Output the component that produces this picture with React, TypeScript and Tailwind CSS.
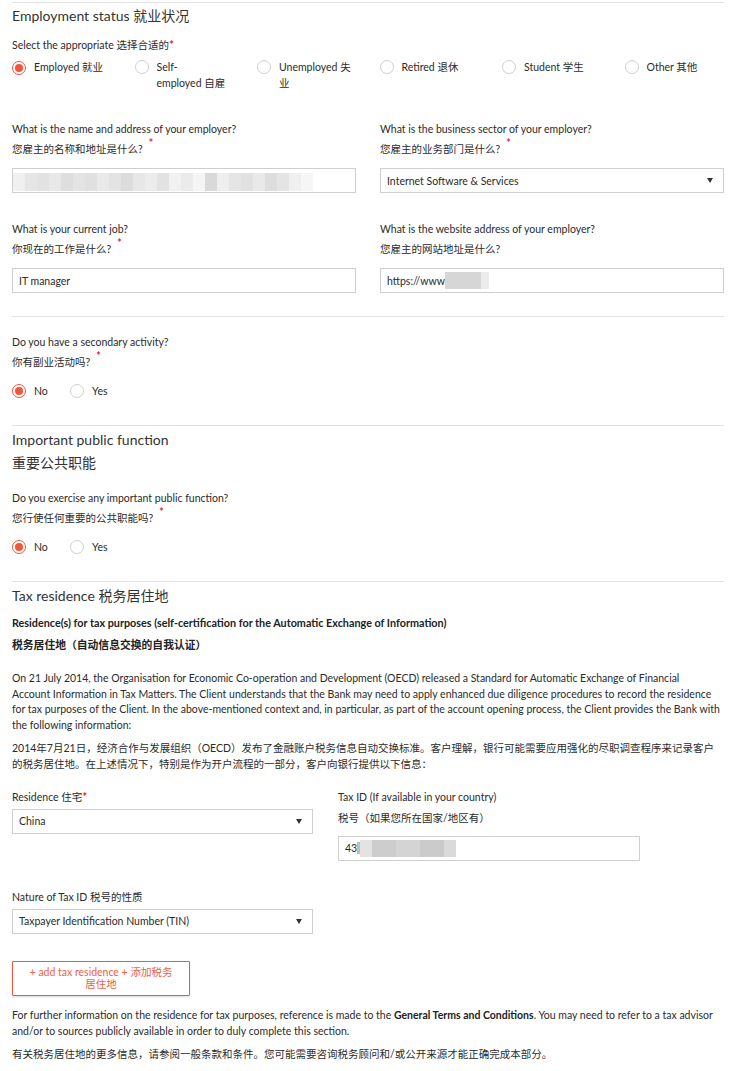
import React from "react";

const F = { fontFamily: "Lato, 'Noto Sans CJK SC', sans-serif" } as React.CSSProperties;

function Radio({ checked }: { checked?: boolean }) {
  return checked ? (
    <span className="inline-flex items-center justify-center w-[14px] h-[14px] rounded-full border-[1.5px] border-[#f0563a] bg-white shrink-0">
      <span className="w-[8px] h-[8px] rounded-full bg-[#f0563a]" />
    </span>
  ) : (
    <span className="inline-block w-[14px] h-[14px] rounded-full border border-[#d0d0d0] bg-white shrink-0" />
  );
}

function Star() {
  return <span className="text-[#e0243a] text-[12px] font-bold">*</span>;
}

function SupStar() {
  return <span className="text-[#e0243a] relative top-[-6px] ml-[6px] font-bold">*</span>;
}

function Arrow() {
  return (
    <svg width="6" height="5" viewBox="0 0 6 5" className="shrink-0">
      <path d="M0 0 L6 0 L3 5 Z" fill="#333" />
    </svg>
  );
}

function Select({ value }: { value: string }) {
  return (
    <div className="h-[25px] border border-[#cfcfcf] bg-white flex items-center justify-between pl-[6px] pr-[10px]">
      <span>{value}</span>
      <Arrow />
    </div>
  );
}

const blur1 = ["#f0f0f0", "#e6e6e6", "#e2e2e2", "#e8e8e8", "#dedede", "#e4e4e4", "#e0e0e0", "#e9e9e9", "#e3e3e3", "#dcdcdc", "#e7e7e7", "#ececec", "#e2e2e2", "#f1f1f1", "#ebebeb", "#f5f5f5", "#d9d9d9", "#eeeeee", "#e5e5e5", "#e1e1e1", "#e9e9e9", "#dddddd", "#e4e4e4", "#f0f0f0", "#f6f6f6"];

export default function App() {
  return (
    <div style={F} className="bg-white text-[#2b2b2b] text-[10.5px] leading-[16px] pl-3 pr-[10px] pb-4 min-h-[1071px]">
      <div className="border-t border-[#e3e3e3] mt-[2px]" />
      <h2 className="text-[14px] leading-[20px] mt-[3px] text-[#333]">Employment status 就业状况</h2>
      <div className="mt-[11px]">Select the appropriate 选择合适的<Star /></div>
      <div className="flex mt-[6px]">
        {[
          [true, <>Employed 就业</>],
          [false, <>Self-<br />employed 自雇</>],
          [false, <>Unemployed 失<br />业</>],
          [false, <>Retired 退休</>],
          [false, <>Student 学生</>],
          [false, <>Other 其他</>],
        ].map(([c, l], i) => (
          <div key={i} className="w-[122.5px] shrink-0 flex items-start gap-[8px] h-[32px]">
            <span className="mt-[1px]"><Radio checked={c as boolean} /></span>
            <span>{l as React.ReactNode}</span>
          </div>
        ))}
      </div>

      <div className="grid grid-cols-2 gap-x-6 mt-[30px]">
        <div>
          <div>What is the name and address of your employer?</div>
          <div className="mt-[4px]">您雇主的名称和地址是什么?<SupStar /></div>
          <div className="mt-[11px] h-[25px] border border-[#cfcfcf] bg-white flex items-center">
            <div className="flex h-[18px] mt-[2px]">
              {blur1.map((c, i) => (
                <span key={i} style={{ background: c }} className="w-[12px] h-full" />
              ))}
            </div>
          </div>
          <div className="mt-[28px]">What is your current job?</div>
          <div className="mt-[4px]">你现在的工作是什么?<SupStar /></div>
          <div className="mt-[11px] h-[25px] border border-[#cfcfcf] bg-white flex items-center pl-[6px]">IT manager</div>
        </div>
        <div>
          <div>What is the business sector of your employer?</div>
          <div className="mt-[4px]">您雇主的业务部门是什么?<SupStar /></div>
          <div className="mt-[11px]"><Select value="Internet Software & Services" /></div>
          <div className="mt-[28px]">What is the website address of your employer?</div>
          <div className="mt-[4px]">您雇主的网站地址是什么?</div>
          <div className="mt-[11px] h-[25px] border border-[#cfcfcf] bg-white flex items-center pl-[6px]">
            <span>https://www</span>
            <span className="inline-block w-[36px] h-[17px] bg-[#d6d6d6]" />
            <span className="inline-block w-[8px] h-[17px] bg-[#ececec]" />
          </div>
        </div>
      </div>

      <div className="border-t border-[#e3e3e3] mt-[23px]" />
      <div className="mt-[17px]">Do you have a secondary activity?</div>
      <div className="mt-[4px]">你有副业活动吗?<SupStar /></div>
      <div className="flex items-center mt-[13px]">
        <div className="w-[58px] flex items-center gap-[8px]"><Radio checked /><span>No</span></div>
        <div className="flex items-center gap-[8px]"><Radio /><span>Yes</span></div>
      </div>

      <div className="border-t border-[#e3e3e3] mt-[26px]" />
      <h2 className="text-[14px] leading-[20px] mt-[4px] text-[#333]">Important public function</h2>
      <h2 className="text-[14px] leading-[20px] mt-[3px] text-[#333]">重要公共职能</h2>
      <div className="mt-[17px]">Do you exercise any important public function?</div>
      <div className="mt-[4px]">您行使任何重要的公共职能吗?<SupStar /></div>
      <div className="flex items-center mt-[13px]">
        <div className="w-[58px] flex items-center gap-[8px]"><Radio checked /><span>No</span></div>
        <div className="flex items-center gap-[8px]"><Radio /><span>Yes</span></div>
      </div>

      <div className="border-t border-[#e3e3e3] mt-[26px]" />
      <h2 className="text-[14px] leading-[20px] mt-[4px] text-[#333]">Tax residence 税务居住地</h2>
      <div className="mt-[9px] font-bold text-[#222] text-[10.8px]">Residence(s) for tax purposes (self-certification for the Automatic Exchange of Information)</div>
      <div className="mt-[6px] font-bold text-[#222] text-[10.8px]">税务居住地（自动信息交换的自我认证）</div>
      <p className="mt-[18px] leading-[15.7px] whitespace-nowrap">
        On 21 July 2014, the Organisation for Economic Co-operation and Development (OECD) released a Standard for Automatic Exchange of Financial<br />
        Account Information in Tax Matters. The Client understands that the Bank may need to apply enhanced due diligence procedures to record the residence<br />
        for tax purposes of the Client. In the above-mentioned context and, in particular, as part of the account opening process, the Client provides the Bank with<br />
        the following information:
      </p>
      <p className="mt-[6px] whitespace-nowrap">
        2014年7月21日，经济合作与发展组织（OECD）发布了金融账户税务信息自动交换标准。客户理解，银行可能需要应用强化的尽职调查程序来记录客户<br />
        的税务居住地。在上述情况下，特别是作为开户流程的一部分，客户向银行提供以下信息：
      </p>

      <div className="grid grid-cols-[301px_302px] gap-x-[25px] mt-[17px]">
        <div>
          <div>Residence 住宅<Star /></div>
          <div className="mt-[4px]"><Select value="China" /></div>
        </div>
        <div>
          <div>Tax ID (If available in your country)</div>
          <div className="mt-[5px]">税号（如果您所在国家/地区有）</div>
          <div className="mt-[10px] h-[25px] border border-[#cfcfcf] bg-white flex items-center pl-[6px]">
            <span>43</span>
            <span className="inline-block w-[3px] h-[12px] bg-[#bdbdbd]" />
            <span className="inline-block w-[12px] h-[17px] bg-[#e3e3e3]" />
            <span className="inline-block w-[24px] h-[17px] bg-[#cdcdcd]" />
            <span className="inline-block w-[24px] h-[17px] bg-[#d4d4d4]" />
            <span className="inline-block w-[24px] h-[17px] bg-[#cbcbcb]" />
            <span className="inline-block w-[12px] h-[17px] bg-[#dadada]" />
          </div>
        </div>
      </div>
      <div className="w-[301px] mt-[28px]">
        <div>Nature of Tax ID 税号的性质</div>
        <div className="mt-[4px]"><Select value="Taxpayer Identification Number (TIN)" /></div>
      </div>

      <button className="mt-[27px] w-[178px] h-[35px] border border-[#ee5a3e] bg-white text-[#f0603f] text-[10.5px] leading-[12px] text-center rounded-[1px] shadow-[0_1px_2px_rgba(0,0,0,0.15)]">
        + add tax residence + 添加税务<br />居住地
      </button>

      <p className="mt-[11px] whitespace-nowrap">
        For further information on the residence for tax purposes, reference is made to the <b className="text-[#222]">General Terms and Conditions</b>. You may need to refer to a tax advisor<br />
        and/or to sources publicly available in order to duly complete this section.
      </p>
      <p className="mt-[7px]">有关税务居住地的更多信息，请参阅一般条款和条件。您可能需要咨询税务顾问和/或公开来源才能正确完成本部分。</p>
    </div>
  );
}
